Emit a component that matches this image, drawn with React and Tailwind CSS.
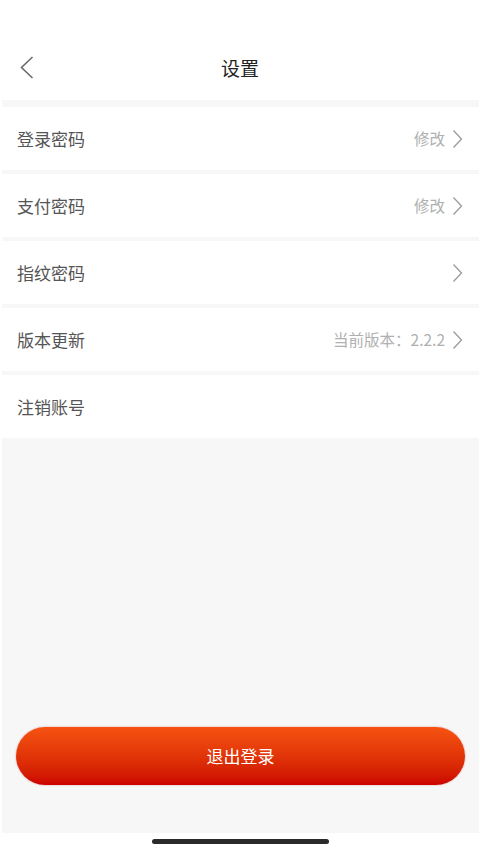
import React from "react";

const ROWS = [
  { label: "登录密码", value: "修改", arrow: true },
  { label: "支付密码", value: "修改", arrow: true },
  { label: "指纹密码", value: "", arrow: true },
  { label: "版本更新", value: "当前版本：2.2.2", arrow: true },
  { label: "注销账号", value: "", arrow: false },
];

function ChevronRight() {
  return (
    <svg width="11" height="20" viewBox="0 0 11 20" fill="none" className="ml-[7px]">
      <path d="M1.5 1.5 L9.5 10 L1.5 18.5" stroke="#9a9a9a" strokeWidth="1.3" />
    </svg>
  );
}

export default function App() {
  return (
    <div
      className="flex flex-col h-[853px] w-[480px] bg-white"
      style={{ fontFamily: '"Noto Sans CJK SC", "Noto Sans", sans-serif' }}
    >
      <div className="relative h-[100px] flex items-center justify-center pt-[36px] shrink-0">
        <svg width="14" height="23" viewBox="0 0 14 23" fill="none" className="absolute left-[20px] top-[56px]">
          <path d="M12.5 1 L1.5 11.5 L12.5 22" stroke="#6b6b6b" strokeWidth="1.6" />
        </svg>
        <span className="text-[19px] text-[#222]">设置</span>
      </div>
      <div className="flex-1 flex flex-col bg-[#f7f7f7] ml-[2px] mr-[1px] pt-[7px]">
        <div className="flex flex-col gap-[4px]">
          {ROWS.map((r) => (
            <div key={r.label} className="h-[63px] bg-white flex items-center pl-[15px] pr-[16px]">
              <span className="flex-1 text-[17px] text-[#555]">{r.label}</span>
              {r.value && <span className="text-[15.5px] text-[#b0b0b0]">{r.value}</span>}
              {r.arrow && <ChevronRight />}
            </div>
          ))}
        </div>
        <div className="flex-1" />
        <button
          className="mx-[14px] mb-[48px] h-[58px] rounded-full bg-gradient-to-b from-[#f65212] to-[#cc0000] text-white text-[17px] shadow-[0_0_2px_rgba(180,0,0,0.4)]"
        >
          退出登录
        </button>
      </div>
      <div className="h-[20px] shrink-0 flex justify-center pt-[6px]">
        <div className="w-[177px] h-[5px] rounded-full bg-[#2b2b2b]" />
      </div>
    </div>
  );
}
